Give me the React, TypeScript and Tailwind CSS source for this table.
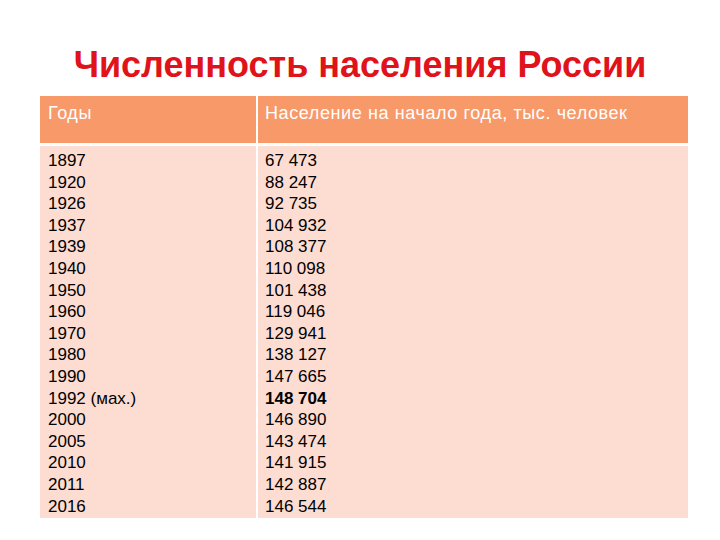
const rows: [string, string, boolean?][] = [
  ["1897", "67 473"],
  ["1920", "88 247"],
  ["1926", "92 735"],
  ["1937", "104 932"],
  ["1939", "108 377"],
  ["1940", "110 098"],
  ["1950", "101 438"],
  ["1960", "119 046"],
  ["1970", "129 941"],
  ["1980", "138 127"],
  ["1990", "147 665"],
  ["1992 (мах.)", "148 704", true],
  ["2000", "146 890"],
  ["2005", "143 474"],
  ["2010", "141 915"],
  ["2011", "142 887"],
  ["2016", "146 544"],
];

export default function App() {
  return (
    <div
      className="w-[720px] h-[540px] bg-white overflow-hidden"
      style={{ fontFamily: '"Liberation Sans", Arial, sans-serif' }}
    >
      <h1 className="pt-[45px] h-[96px] text-center text-[36px] leading-[40px] font-bold text-[#e0121a]">
        Численность населения России
      </h1>
      <div className="ml-[40px] w-[648px] grid grid-cols-[216px_1fr] gap-x-[2px] gap-y-[3px]">
        <div className="bg-[#f8996a] h-[47px] pl-[8px] pt-[4px] text-[18px] tracking-[0.6px] text-white">Годы</div>
        <div className="bg-[#f8996a] h-[47px] pl-[7px] pt-[4px] text-[18px] tracking-[0.6px] text-white">
          Население на начало года, тыс. человек
        </div>
        <div className="bg-[#fddcd2] pl-[8px] pt-[4px] pb-[1px] text-[17px] leading-[21.6px] text-black">
          {rows.map(([y]) => (
            <div key={y}>{y}</div>
          ))}
        </div>
        <div className="bg-[#fddcd2] pl-[7px] pt-[4px] pb-[1px] text-[17px] leading-[21.6px] text-black">
          {rows.map(([y, v, b]) => (
            <div key={y} className={b ? "font-bold" : ""}>
              {v}
            </div>
          ))}
        </div>
      </div>
    </div>
  );
}
